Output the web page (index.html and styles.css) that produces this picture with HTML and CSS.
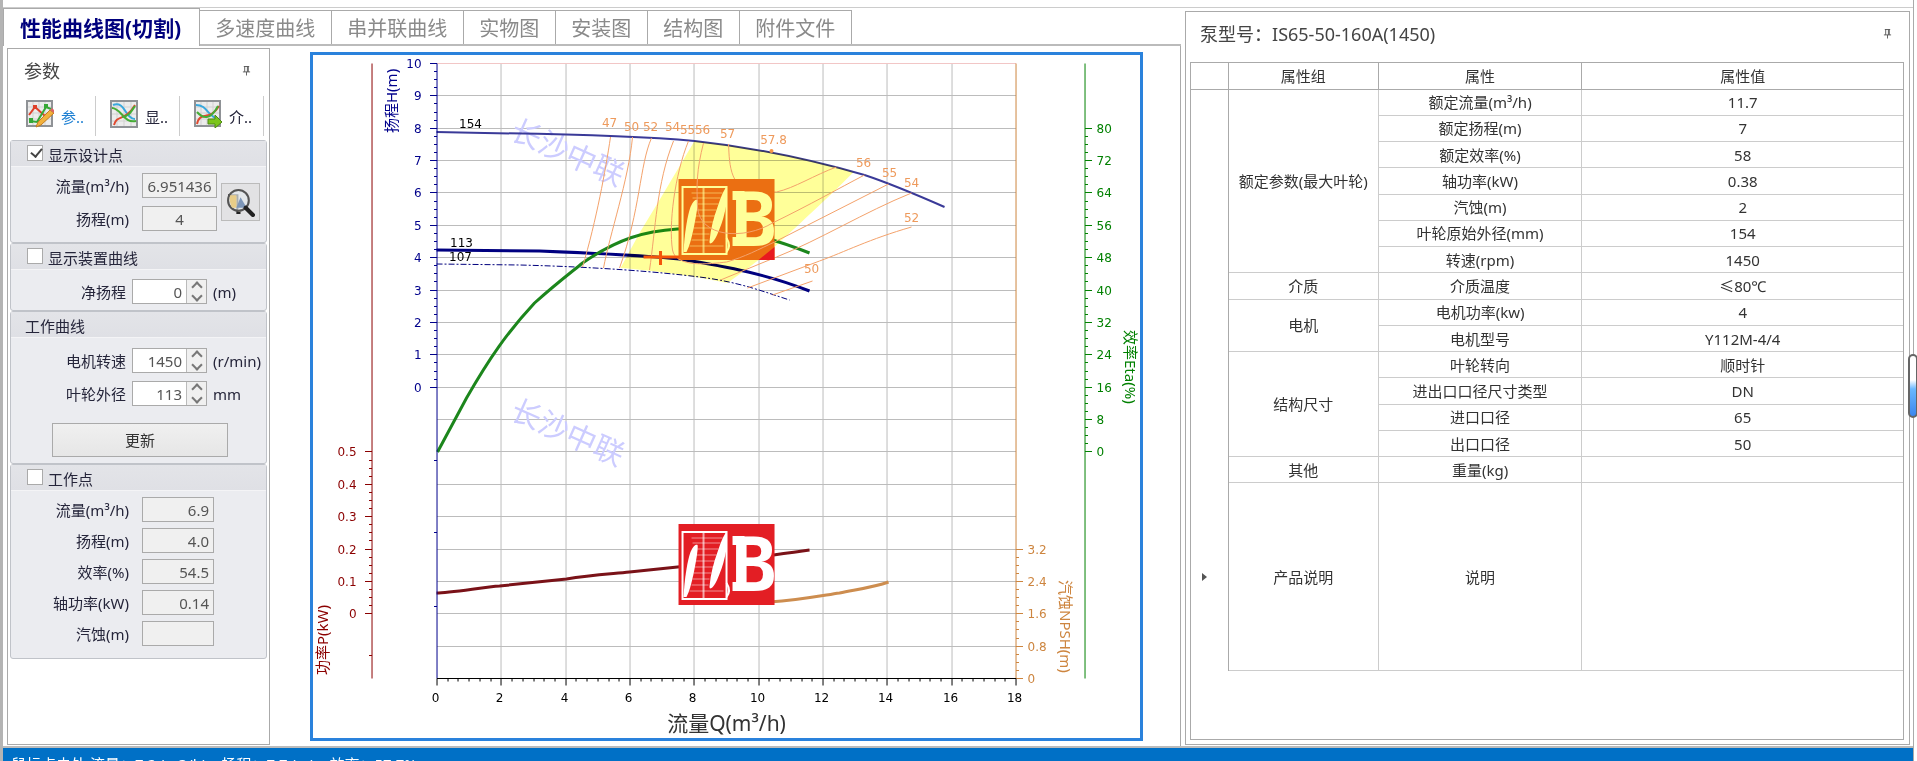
FILE: index.html
```
<!DOCTYPE html>
<html lang="zh-CN">
<head>
    <meta charset="UTF-8">
    <meta name="viewport" content="width=device-width, initial-scale=1.0">
    <title>IS65-50-160A(1450)</title>
    <link rel="stylesheet" href="styles.css">
</head>
<body>
    <div class="window">
        <main class="main">
            <div class="workspace">
                <nav class="tabs">
                    <button type="button" class="tab active">性能曲线图(切割)</button>
                    <button type="button" class="tab">多速度曲线</button>
                    <button type="button" class="tab">串并联曲线</button>
                    <button type="button" class="tab">实物图</button>
                    <button type="button" class="tab">安装图</button>
                    <button type="button" class="tab">结构图</button>
                    <button type="button" class="tab">附件文件</button>
                </nav>
                <div class="content">
                    <aside class="params">
                        <header class="panel-title">
                            <span>参数</span>
                            <svg class="pin" viewBox="0 0 10 12"><path d="M2 1h6M3 1v6M6 1v6M7 1v6M1 7h8M5 7v4" /></svg>
                        </header>
                        <div class="toolbar">
                            <button type="button" class="tool current">
                                <svg class="tool-icon" viewBox="0 0 28 28">
                                    <rect x="1" y="1" width="25" height="25" fill="#ececec" stroke="#8f9296" stroke-width="2" />
                                    <path d="M7 2v23M13 2v23M19 2v23M2 7h23M2 13h23M2 19h23" stroke="#d2d2d2" />
                                    <path d="M3 15L9 7l10 9 5-4" fill="none" stroke="#e0402a" stroke-width="2" />
                                    <path d="M4 21l7 1 9-15 5 2" fill="none" stroke="#35a835" stroke-width="2" />
                                    <path d="M7 5h4v4H7z" fill="#e0402a" /><path d="M18 4h4v4h-4zM3 18h4v5H3z" fill="#35a835" />
                                    <path d="M10 27l2-5L24 10l4 3-13 12z" fill="#f2b13c" stroke="#c17c22" />
                                    <path d="M24 10l2-2 3 3-1 2z" fill="#d66" />
                                </svg>
                                <span>参..</span>
                            </button>
                            <button type="button" class="tool">
                                <svg class="tool-icon" viewBox="0 0 28 28">
                                    <rect x="1" y="1" width="26" height="26" fill="#ececec" stroke="#8f9296" stroke-width="2" />
                                    <path d="M7 2v24M14 2v24M21 2v24M2 7h24M2 14h24M2 21h24" stroke="#d2d2d2" />
                                    <path d="M2 8c9 0 12 16 24 13" fill="none" stroke="#45ad35" stroke-width="2" />
                                    <path d="M3 5c12-5 12 14 22 14" fill="none" stroke="#38a8dd" stroke-width="2" />
                                    <path d="M4 25c3-11 11-3 21-20" fill="none" stroke="#e04a30" stroke-width="2" />
                                    <path d="M12 17c6 0 9-5 13-11" fill="none" stroke="#45ad35" stroke-width="2" />
                                </svg>
                                <span>显..</span>
                            </button>
                            <button type="button" class="tool">
                                <svg class="tool-icon" viewBox="0 0 28 28">
                                    <rect x="1" y="1" width="25" height="25" fill="#ececec" stroke="#8f9296" stroke-width="2" />
                                    <path d="M7 2v23M13 2v23M19 2v23M2 7h23M2 13h23M2 19h23" stroke="#d2d2d2" />
                                    <path d="M2 5c12 0 11 12 23 14" fill="none" stroke="#38a8dd" stroke-width="2" />
                                    <path d="M3 24c3-14 13-2 22-18" fill="none" stroke="#e04a30" stroke-width="2" />
                                    <path d="M3 12c7 8 14 7 21-6" fill="none" stroke="#45ad35" stroke-width="2" />
                                    <path d="M14 19h7v-4l7 7-7 6v-4h-7z" fill="#7cc51c" stroke="#4c8a12" />
                                </svg>
                                <span>介..</span>
                            </button>
                        </div>

                        <section class="group">
                            <label class="group-head"><input type="checkbox" checked>显示设计点</label>
                            <div class="fields design">
                                <label for="designFlow">流量(m³/h)</label>
                                <input type="text" class="box gray center" id="designFlow" value="6.951436">
                                <button type="button" class="search" aria-label="选型">
                                    <svg viewBox="0 0 28 28">
                                        <path d="M2 7h9v17h3" fill="#efd99a" stroke="#222" stroke-width="2" />
                                        <circle cx="12" cy="12" r="10" fill="#e4e9ec" fill-opacity=".7" stroke="#555" stroke-width="2" />
                                        <path d="M4 7h6v12H6c-2-3-3-8-2-12z" fill="#e8cd88" />
                                        <path d="M14 9l6 10H10z" fill="#7d96b8" />
                                        <path d="M19 19l7 7" stroke="#222" stroke-width="4" stroke-linecap="round" />
                                    </svg>
                                </button>
                                <label for="designHead">扬程(m)</label>
                                <input type="text" class="box gray center" id="designHead" value="4">
                            </div>
                        </section>

                        <section class="group">
                            <label class="group-head"><input type="checkbox">显示装置曲线</label>
                            <div class="fields spin">
                                <label for="netHead">净扬程</label>
                                <div class="spinner">
                                    <input type="number" id="netHead" value="0">
                                    <span class="arrows"><button type="button" aria-label="增加"></button><button type="button" aria-label="减少"></button></span>
                                </div>
                                <span class="unit">(m)</span>
                            </div>
                        </section>

                        <section class="group">
                            <h2 class="group-head">工作曲线</h2>
                            <div class="fields spin work">
                                <label for="speed">电机转速</label>
                                <div class="spinner">
                                    <input type="number" id="speed" value="1450">
                                    <span class="arrows"><button type="button" aria-label="增加"></button><button type="button" aria-label="减少"></button></span>
                                </div>
                                <span class="unit">(r/min)</span>
                                <label for="diameter">叶轮外径</label>
                                <div class="spinner">
                                    <input type="number" id="diameter" value="113">
                                    <span class="arrows"><button type="button" aria-label="增加"></button><button type="button" aria-label="减少"></button></span>
                                </div>
                                <span class="unit">mm</span>
                            </div>
                            <button type="button" class="update">更新</button>
                        </section>

                        <section class="group">
                            <label class="group-head"><input type="checkbox">工作点</label>
                            <div class="fields point">
                                <label for="flow">流量(m³/h)</label>
                                <input type="text" class="box gray" id="flow" value="6.9" readonly>
                                <label for="head">扬程(m)</label>
                                <input type="text" class="box gray" id="head" value="4.0" readonly>
                                <label for="eta">效率(%)</label>
                                <input type="text" class="box gray" id="eta" value="54.5" readonly>
                                <label for="power">轴功率(kW)</label>
                                <input type="text" class="box gray" id="power" value="0.14" readonly>
                                <label for="npsh">汽蚀(m)</label>
                                <input type="text" class="box gray" id="npsh" value="" readonly>
                            </div>
                        </section>
                    </aside>

                    <div class="chart">
                        <svg viewBox="314 55 826 683">
                            <defs>
                                <symbol id="logo" viewBox="0 0 96 81">
                                    <path d="M4 8h44v67H4z" fill="none" stroke="currentColor" stroke-width="2" />
                                    <path d="M13 14h31M14 19h28M19 25h21M18 31h20M17 37h20M16 43h19M15 49h18M14 55h17M13 61h17M11 67h34" stroke="currentColor" stroke-opacity=".5" />
                                    <path d="M25 9v65" stroke="currentColor" stroke-width="2" stroke-opacity=".6" />
                                    <path d="M5 73C6 54 9 36 12 28c3-7 6-8 7-7 1 3-2 19-4 29-2 9-4 17-7 23z" fill="currentColor" />
                                    <path d="M31 62c1-12 4-23 8-34 3-9 6-17 9-20v17c-2 10-4 18-7 25-3 8-6 13-8 14-2 1-2 0-2-2z" fill="currentColor" />
                                    <path d="M48 59q5 8 0 14" fill="none" stroke="currentColor" stroke-width="2" />
                                    <path d="M54 12h12v9H54zM54 58h12v9H54z" fill="currentColor" />
                                    <text class="logo-letter" x="53" y="67">B</text>
                                </symbol>
                            </defs>
                            <g id="grid"></g>
                            <g class="watermark">
                                <text transform="translate(509 138) rotate(24)">长沙中联</text>
                                <text transform="translate(509 418) rotate(24)">长沙中联</text>
                            </g>
                            <path class="curve head-max" d="M437 132L485 133C560 134 650 137 695 141C760 148 813 160 865 175C895 185 920 196 945 207" />
                            <path class="curve head-min" d="M437 264L520 265C600 267 660 272 700 277S765 292 790 300" />
                            <path class="curve head-cut" d="M437 250L540 251C590 253 640 255 680 259C730 267 770 275 810 291" />
                            <path class="curve eta" d="M438 452L467 398C490 358 508 332 535 303C556 284 572 272 583 263C618 239 645 231 678 229C725 227 760 233 810 253" />
                            <path class="curve power" d="M437 593C450 593 485 587 500 586L567 579C590 575 610 574 630 572L678 567C720 563 765 556 810 550" />
                            <path class="curve npsh" d="M700 602H770C800 600 820 596 840 593C860 589 875 587 889 582" />
                            <path class="zone" d="M695 141C760 148 813 160 854 172C840 187 800 224 775 247C760 260 742 273 728 283C700 277 660 271 621 268L640 233L660 200Z" />
                            <g class="iso">
                                <path d="M611 137C606 170 597 220 583 267" />
                                <path d="M633 137C629 180 610 235 604 268" />
                                <path d="M652 138C640 165 641 210 620 268" />
                                <path d="M674 141C657 183 656 230 650 270" />
                                <path d="M912 193C865 212 820 240 777 257L721 280" />
                                <path d="M912 227C870 239 845 252 820 261L748 288" />
                                <path d="M813 281L773 295" />
                                <path d="M729 144C730 165 730 192 760 192H777C795 188 815 175 837 167" />
                            </g>
                            <g>
                                <rect x="679" y="179" width="96" height="81" fill="#eb6f12" />
                                <path d="M775 247v13h-16z" fill="#e8191f" />
                                <use href="#logo" class="mark-yellow" x="679" y="179" width="96" height="81" />
                                <rect x="679" y="524" width="96" height="81" fill="#e31e24" />
                                <use href="#logo" class="mark-white" x="679" y="524" width="96" height="81" />
                            </g>
                            <g class="iso">
                                <path d="M689 141C675 175 669 225 673 250C676 268 710 264 727 262C745 257 760 249 775 242L889 184" />
                                <path d="M704 143C697 170 697 185 698 207C700 238 745 240 773 223C810 205 840 188 865 175" />
                            </g>
                            <path class="duty" d="M644 257h36M661 251v14" />
                            <circle cx="772" cy="151" r="2" fill="#f79646" />
                            <g class="iso-label">
                                <text x="610" y="127">47</text>
                                <text x="632" y="131">50</text>
                                <text x="651" y="131">52</text>
                                <text x="673" y="131">54</text>
                                <text x="688" y="134">55</text>
                                <text x="703" y="134">56</text>
                                <text x="728" y="138">57</text>
                                <text x="774" y="144">57.8</text>
                                <text x="864" y="167">56</text>
                                <text x="890" y="177">55</text>
                                <text x="912" y="187">54</text>
                                <text x="912" y="222">52</text>
                                <text x="812" y="273">50</text>
                            </g>
                            <g class="size-label">
                                <text x="471" y="128">154</text>
                                <text x="462" y="247">113</text>
                                <text x="461" y="261">107</text>
                            </g>
                            <g id="axes"></g>
                            <g class="axis-title">
                                <text class="h" transform="translate(397 133) rotate(-90)">扬程H(m)</text>
                                <text class="p" transform="translate(328 675) rotate(-90)">功率P(kW)</text>
                                <text class="e" transform="translate(1125 330) rotate(90)">效率Eta(%)</text>
                                <text class="n" transform="translate(1060 580) rotate(90)">汽蚀NPSH(m)</text>
                            </g>
                            <text class="x-title" x="727" y="731">流量Q(m³/h)</text>
                        </svg>
                    </div>
                </div>
            </div>

            <section class="props">
                <header class="panel-title">
                    <span>泵型号：IS65-50-160A(1450)</span>
                    <svg class="pin" viewBox="0 0 10 12"><path d="M2 1h6M3 1v6M6 1v6M7 1v6M1 7h8M5 7v4" /></svg>
                </header>
                <div class="table-box">
                    <table>
                        <colgroup><col class="c-mark"><col class="c-group"><col class="c-name"><col></colgroup>
                        <thead>
                            <tr><th></th><th>属性组</th><th>属性</th><th>属性值</th></tr>
                        </thead>
                        <tbody>
                            <tr><td rowspan="15" class="blank"></td><td rowspan="7">额定参数(最大叶轮)</td><td>额定流量(m³/h)</td><td>11.7</td></tr>
                            <tr><td>额定扬程(m)</td><td>7</td></tr>
                            <tr><td>额定效率(%)</td><td>58</td></tr>
                            <tr><td>轴功率(kW)</td><td>0.38</td></tr>
                            <tr><td>汽蚀(m)</td><td>2</td></tr>
                            <tr><td>叶轮原始外径(mm)</td><td>154</td></tr>
                            <tr><td>转速(rpm)</td><td>1450</td></tr>
                            <tr><td>介质</td><td>介质温度</td><td>≤80℃</td></tr>
                            <tr><td rowspan="2">电机</td><td>电机功率(kw)</td><td>4</td></tr>
                            <tr><td>电机型号</td><td>Y112M-4/4</td></tr>
                            <tr><td rowspan="4">结构尺寸</td><td>叶轮转向</td><td>顺时针</td></tr>
                            <tr><td>进出口口径尺寸类型</td><td>DN</td></tr>
                            <tr><td>进口口径</td><td>65</td></tr>
                            <tr><td>出口口径</td><td>50</td></tr>
                            <tr><td>其他</td><td>重量(kg)</td><td></td></tr>
                            <tr class="desc"><td class="blank"><span class="row-arrow"></span></td><td>产品说明</td><td>说明</td><td></td></tr>
                        </tbody>
                    </table>
                </div>
            </section>
        </main>
        <footer class="status">鼠标点击处 流量：7.2 (m3/h)，扬程：7.7 (m)，效率：57.7%</footer>
    </div>
    <div class="thumb"></div>

    <script>
        var grid = document.getElementById("grid");
        var axes = document.getElementById("axes");
        var left = 437, right = 1016, top0 = 63, bottom = 678;
        var stepX = (right - left) / 9;
        var stepY = (bottom - top0) / 19;

        function line(parent, x1, y1, x2, y2, cls) {
            var el = document.createElementNS("http://www.w3.org/2000/svg", "path");
            el.setAttribute("d", "M" + x1 + " " + y1 + "L" + x2 + " " + y2);
            el.setAttribute("class", "line " + cls);
            parent.appendChild(el);
        }

        function label(x, y, text, cls) {
            var el = document.createElementNS("http://www.w3.org/2000/svg", "text");
            el.setAttribute("x", x);
            el.setAttribute("y", y);
            el.setAttribute("class", "tick-label " + cls);
            el.textContent = text;
            axes.appendChild(el);
        }

        // from/to are grid row numbers counted from the top of the plot
        function axisY(x, dir, from, to, minor, labels, cls) {
            line(axes, x, top0, x, bottom, cls);
            for (var i = from; i <= to; i++) {
                var y = Math.round(top0 + i * stepY);
                line(axes, x, y, x + dir * 7, y, cls);
                label(x + dir * (dir < 0 ? 15 : 12), y + 5, labels[i - from], cls);
                for (var j = 1; j < minor && i < to; j++) {
                    var my = Math.round(top0 + (i + j / minor) * stepY);
                    line(axes, x, my, x + dir * 3, my, cls);
                }
            }
        }

        for (var r = 1; r < 19; r++) {
            var gy = Math.round(top0 + r * stepY);
            line(grid, left, gy, right, gy, "g");
        }
        for (var c = 1; c < 9; c++) {
            var gx = Math.round(left + c * stepX);
            line(grid, gx, top0, gx, bottom, "g");
        }
        line(grid, left, top0, right, top0, "t");

        axisY(372, -1, 12, 17, 4, ["0.5", "0.4", "0.3", "0.2", "0.1", "0"], "p");
        axisY(437, -1, 0, 10, 4, [10, 9, 8, 7, 6, 5, 4, 3, 2, 1, 0], "h");
        axisY(1016, 1, 15, 19, 4, ["3.2", "2.4", "1.6", "0.8", "0"], "n");
        axisY(1085, 1, 2, 12, 4, [80, 72, 64, 56, 48, 40, 32, 24, 16, 8, 0], "e");
        line(axes, 369, 655, 372, 655, "p");
        line(axes, 434, 460, 437, 460, "h");
        line(axes, 434, 532, 437, 532, "h");
        line(axes, 434, 606, 437, 606, "h");

        line(axes, left, bottom, right, bottom, "x");
        for (var k = 0; k <= 54; k++) {
            var tx = Math.round(left + k * stepX / 6);
            line(axes, tx, bottom, tx, bottom + (k % 6 ? 3 : 7), "x");
            if (k % 6 === 0) {
                label(tx - 1, 702, k / 3, "x");
            }
        }
    </script>
</body>
</html>
```
FILE: styles.css
```
* {
    box-sizing: border-box;
}
body {
    margin: 0;
    height: 100vh;
    overflow: hidden;
    position: relative;
    background: #fff;
    color: #333;
    font-family: "Noto Sans", "Noto Sans CJK SC", sans-serif;
    font-size: 15px;
    line-height: 20px;
}
button, input {
    font: inherit;
    color: inherit;
    margin: 0;
}
.window {
    display: flex;
    flex-direction: column;
    height: 100vh;
    margin-right: 3px;
    border-left: 3px solid #b4b4b4;
    border-right: 1px solid #aaa;
    padding-top: 7px;
}
.main {
    flex: 1;
    min-height: 0;
    display: grid;
    grid-template-columns: 13fr 8fr;
    gap: 4px;
    padding-right: 3px;
    border-top: 1px solid #ccc;
    border-bottom: 2px solid #bbb;
}
.workspace {
    display: flex;
    flex-direction: column;
    min-width: 0;
    min-height: 0;
}

/* tabs */
.tabs {
    display: flex;
    align-items: flex-end;
    height: 38px;
    border-bottom: 2px solid #bbb;
}
.tab {
    height: 34px;
    padding: 3px 16px 0 15px;
    border: 1px solid #aaa;
    border-left: 0;
    border-bottom: 0;
    background: #fff;
    color: #8a8a8a;
    font-size: 20px;
    line-height: 28px;
    white-space: nowrap;
}
.tab.active {
    height: 38px;
    margin-bottom: -2px;
    padding: 0 18px 0 16px;
    border-left: 1px solid #aaa;
    color: #00007d;
    font-size: 21px;
    font-weight: bold;
}
.content {
    flex: 1;
    min-height: 0;
    display: flex;
    border-right: 1px solid #aaa;
}

/* left parameter panel */
.params {
    flex: 0 0 263px;
    margin: 2px 0 1px 4px;
    border: 1px solid #aaa;
    padding: 0 2px;
    color: #25253a;
}
.panel-title {
    display: flex;
    justify-content: space-between;
    align-items: center;
    padding: 0 16px 0 14px;
    color: #444;
    font-size: 18px;
    line-height: 24px;
}
.params .panel-title {
    height: 47px;
    padding-bottom: 3px;
}
.pin {
    width: 9px;
    height: 12px;
    fill: none;
    stroke: #555;
    stroke-width: 1;
}
.toolbar {
    display: flex;
    height: 40px;
    margin-bottom: 4px;
    padding-left: 2px;
}
.tool {
    display: flex;
    align-items: center;
    flex: 0 0 84px;
    gap: 7px;
    padding: 0 0 4px 14px;
    border: 0;
    border-right: 1px solid #ccc;
    background: none;
    white-space: nowrap;
}
.tool span {
    padding-top: 6px;
}
.tool.current {
    color: #1c7fd2;
}
.tool-icon {
    flex: 0 0 28px;
    height: 28px;
}
.group {
    border: 1px solid #c0c3c9;
    border-radius: 3px;
    background: #ebecf0;
}
.group-head {
    display: flex;
    align-items: center;
    gap: 5px;
    height: 26px;
    margin: 0;
    padding: 2px 0 0 16px;
    background: linear-gradient(#e3e4e8, #dfe0e5);
    border-bottom: 1px solid #f4f4f6;
    font-size: 15px;
    font-weight: normal;
}
h2.group-head {
    padding-left: 14px;
}
.group-head input {
    appearance: none;
    width: 16px;
    height: 16px;
    margin-top: -3px;
    border: 1px solid #aaa;
    background: #fff;
}
.group-head input:checked::before {
    content: "";
    display: block;
    width: 5px;
    height: 9px;
    margin: 0 0 0 5px;
    border: solid #444;
    border-width: 0 2px 2px 0;
    transform: rotate(40deg);
}
.fields {
    display: grid;
    align-items: center;
    grid-auto-rows: 25px;
    row-gap: 8px;
    text-align: right;
    white-space: nowrap;
}
.design {
    grid-template-columns: 118px 75px 30px;
    column-gap: 13px;
    padding: 6px 0 11px;
}
.box {
    height: 25px;
    width: 100%;
    border: 1px solid #aaa;
    padding: 0 4px;
    background: #fff;
    color: #555;
    text-align: right;
}
.gray {
    background: #f0f0f0;
}
.center {
    text-align: center;
}
.search {
    grid-column: 3;
    grid-row: 1 / 3;
    height: 38px;
    width: 39px;
    margin-left: -9px;
    padding: 4px;
    border: 1px solid #bbb;
    background: #e2e2e4;
}
.spin {
    grid-template-columns: 115px 75px 1fr;
    column-gap: 6px;
    padding: 9px 0 6px;
}
.work {
    padding: 10px 0 0;
}
.spinner {
    display: flex;
    height: 25px;
    border: 1px solid #aaa;
    background: #fff;
}
.spinner input {
    appearance: textfield;
    flex: 1;
    min-width: 0;
    border: 0;
    padding: 0 4px;
    background: none;
    color: #555;
    text-align: right;
}
.spinner input::-webkit-inner-spin-button {
    appearance: none;
}
.arrows {
    display: flex;
    flex-direction: column;
    width: 20px;
    border-left: 1px solid #bbb;
    background: #f0f0f0;
}
.arrows button {
    flex: 1;
    display: flex;
    align-items: center;
    justify-content: center;
    border: 0;
    padding: 3px 0 0;
    background: none;
}
.arrows button::before {
    content: "";
    width: 6px;
    height: 6px;
    border: solid #777;
    border-width: 2px 0 0 2px;
    transform: rotate(45deg);
}
.arrows button + button {
    padding: 0 0 3px;
}
.arrows button + button::before {
    border-width: 0 2px 2px 0;
}
.unit {
    text-align: left;
}
.update {
    display: block;
    width: 176px;
    height: 34px;
    margin: 17px 0 6px 41px;
    border: 1px solid #aaa;
    background: linear-gradient(#f0f0f0, #e6e6e6);
    color: #333;
}
.point {
    grid-template-columns: 118px 72px;
    column-gap: 13px;
    row-gap: 6px;
    padding: 6px 0 12px;
}

/* chart */
.chart {
    flex: 1;
    min-width: 0;
    margin: 6px 37px 5px 40px;
    border: 3px solid #2a82dc;
}
.chart svg {
    display: block;
    width: 100%;
    height: 100%;
}
.line {
    fill: none;
    stroke-width: 1;
    transform: translate(0.5px, 0.5px);
}
.line.g { stroke: #bcbcbc; }
.line.t { stroke: #f2c6c6; }
.line.x { stroke: #000; }
.line.h { stroke: #00008b; }
.line.p { stroke: #8b0000; }
.line.e { stroke: #008000; }
.line.n { stroke: #cd853f; }
.curve {
    fill: none;
    stroke-width: 3;
}
.head-max {
    stroke: #3a3a98;
    stroke-width: 2;
}
.head-min {
    stroke: #00007d;
    stroke-width: 1;
    stroke-dasharray: 6 2 2 2;
}
.head-cut { stroke: #000080; }
.eta { stroke: #1c861c; }
.power { stroke: #7a1218; }
.npsh { stroke: #cd8d4f; }
.zone {
    fill: #ffff99;
    mix-blend-mode: multiply;
}
.iso path {
    fill: none;
    stroke: #f4a26b;
}
.iso-label, .size-label, .tick-label {
    font-family: "DejaVu Sans", sans-serif;
    font-size: 12px;
}
.iso-label {
    fill: #ee9a5c;
    text-anchor: middle;
}
.size-label {
    fill: #000;
    text-anchor: middle;
}
.tick-label.x { text-anchor: middle; fill: #000; }
.tick-label.h { text-anchor: end; fill: #00008b; }
.tick-label.p { text-anchor: end; fill: #8b0000; }
.tick-label.e { fill: #008000; }
.tick-label.n { fill: #cd853f; }
.axis-title {
    font-size: 15px;
}
.axis-title .h { fill: #00008b; }
.axis-title .p { fill: #8b0000; }
.axis-title .e { fill: #008000; }
.axis-title .n { fill: #cd853f; }
.x-title {
    font-size: 21px;
    text-anchor: middle;
    fill: #333;
}
.watermark {
    fill: #ccccff;
    font-size: 30px;
}
.duty {
    stroke: #f4560a;
    stroke-width: 3;
}
.mark-yellow { color: #ffff99; }
.mark-white { color: #fff; }
.logo-letter {
    font-family: "DejaVu Sans Mono", monospace;
    font-size: 75px;
    font-weight: bold;
    fill: currentColor;
}

/* pump properties */
.props {
    display: flex;
    flex-direction: column;
    min-height: 0;
    margin: 3px 0 1px;
    padding: 0 5px 4px 4px;
    border: 1px solid #aaa;
}
.props .panel-title {
    height: 50px;
    padding: 0 12px 6px 10px;
}
.table-box {
    flex: 1;
    min-height: 0;
    border: 1px solid #aaa;
}
table {
    width: 100%;
    height: 90%;
    table-layout: fixed;
    border-collapse: collapse;
    text-align: center;
}
.c-mark { width: 5.2%; }
.c-group { width: 21.1%; }
.c-name { width: 28.6%; }
th, td {
    height: 26px;
    padding: 0;
    border: 1px solid #ccc;
    font-weight: normal;
    white-space: nowrap;
}
tr > :first-child.blank, th:first-child {
    border-left: 0;
}
tr > :last-child {
    border-right: 0;
}
th {
    border-color: #aaa;
    border-top: 0;
}
td.blank {
    border-top: 0;
    border-bottom: 0;
    border-right-color: #aaa;
}
.desc td {
    height: 186px;
}
.row-arrow {
    display: block;
    margin-left: 11px;
    width: 0;
    border: 4px solid transparent;
    border-left: 5px solid #555;
    border-right: 0;
}

.status {
    flex: 0 0 13px;
    overflow: hidden;
    padding: 6px 8px 0;
    background: #0070c6;
    color: #fff;
    white-space: nowrap;
}
/* floating scroll handle at the window edge */
.thumb {
    position: absolute;
    right: -1px;
    top: 354px;
    width: 10px;
    height: 64px;
    border: 2px solid #666;
    border-radius: 5px;
    background: linear-gradient(#fff 40%, #6ab8ff 55%, #3c86ee);
}
```
